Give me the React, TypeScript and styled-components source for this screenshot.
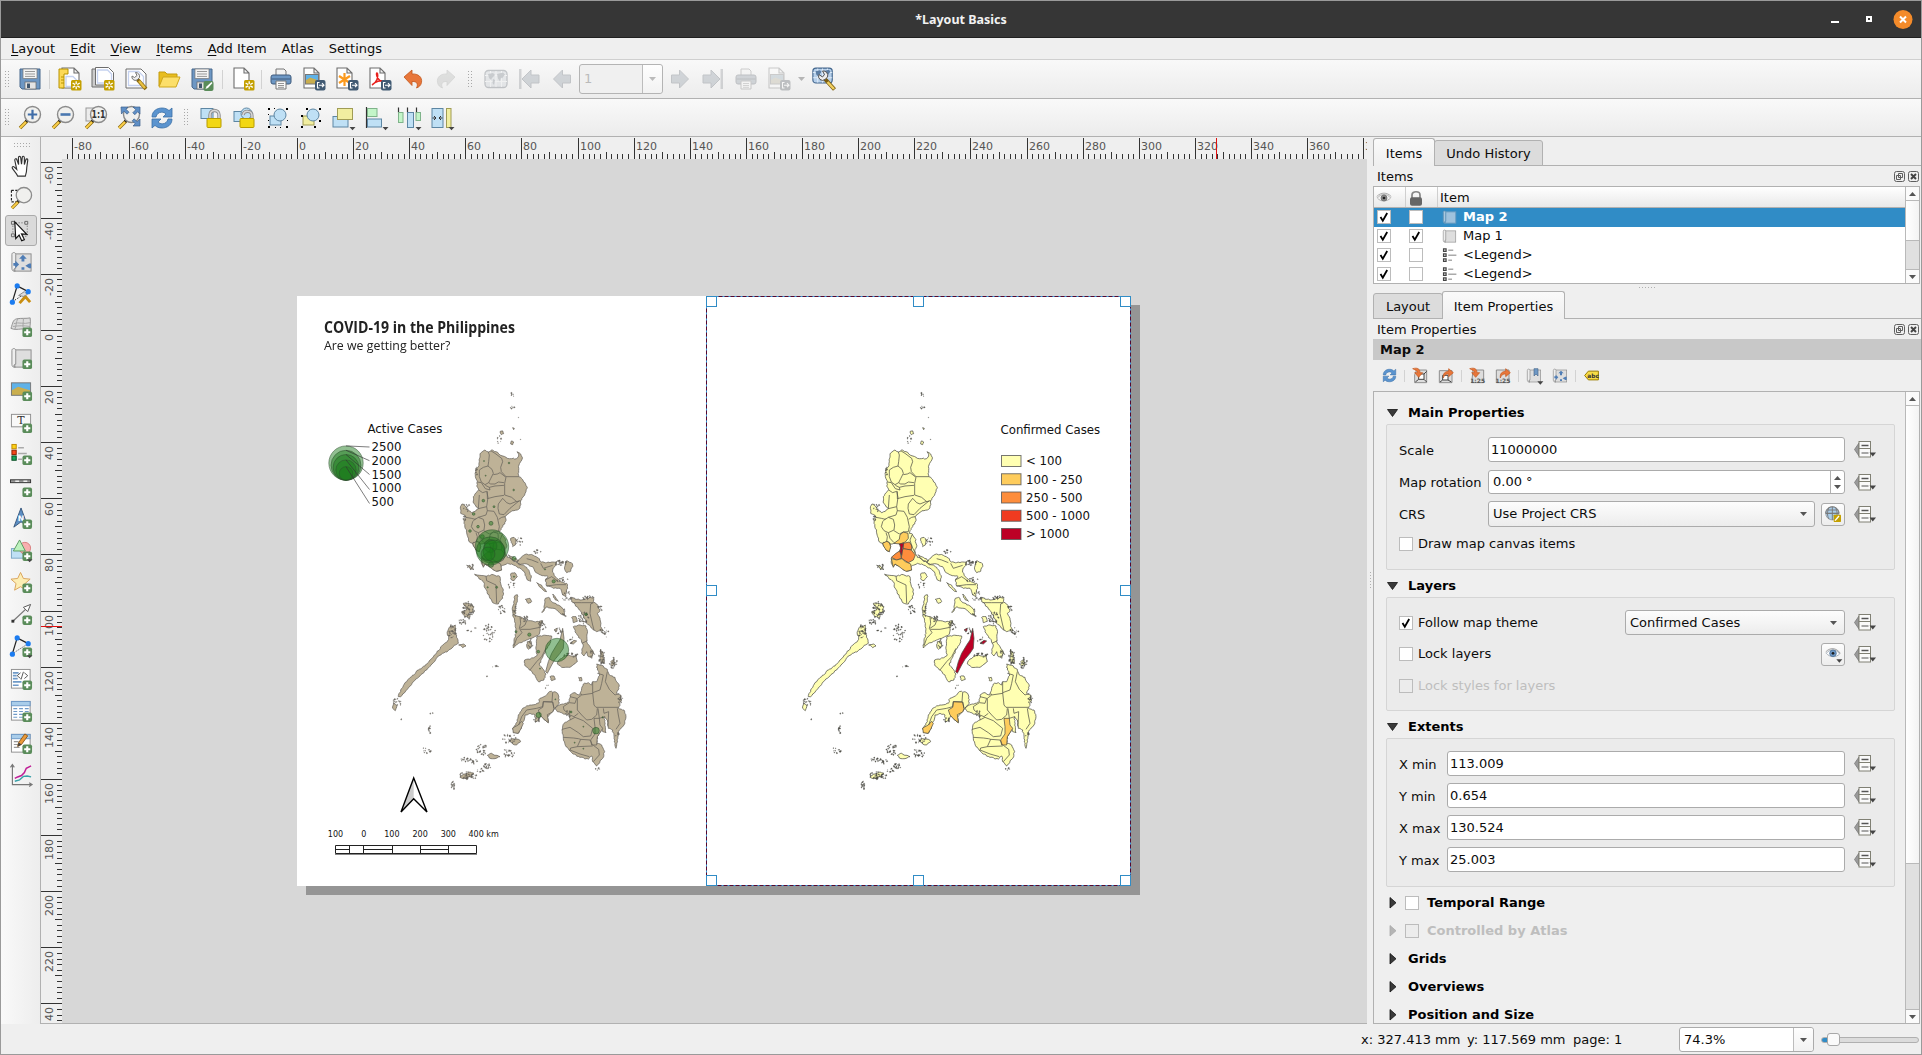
import React from 'react';
import styled, { createGlobalStyle, css } from 'styled-components';

const GlobalStyle = createGlobalStyle`
  * { box-sizing: border-box; }
  body { margin: 0; background: #efefef; }
  svg { display: block; flex: none; overflow: visible; }
`;

/* ---------- window chrome ---------- */

const Window = styled.div`
  width: 1922px;
  height: 1055px;
  border: 1px solid #9a9a9a;
  background: #efefef;
  display: flex;
  flex-direction: column;
  overflow: hidden;
  font-family: 'DejaVu Sans', sans-serif;
  font-size: 13px;
  line-height: 16px;
  color: #0c0c0c;
  white-space: pre;
`;
const TitleBar = styled.header`
  height: 37px;
  flex: none;
  background: #363636;
  border-bottom: 1px solid #202020;
  display: grid;
  grid-template-columns: 1fr auto 1fr;
  align-items: center;
`;
const WindowTitle = styled.div`
  grid-column: 2;
  font: bold 12.5px 'Noto Sans', sans-serif;
  color: #f2f2f2;
  padding-top: 1px;
`;
const WindowButtons = styled.div`
  display: flex;
  justify-content: flex-end;
  padding-right: 8px;
`;
const MenuBar = styled.nav`
  height: 22px;
  flex: none;
  border-bottom: 1px solid #cfcfcf;
  display: flex;
  gap: 15px;
  align-items: center;
  padding: 1px 0 0 10px;
`;
const Mnemonic = styled.span`
  text-decoration: underline;
  text-underline-offset: 2px;
  text-decoration-thickness: 1px;
  text-decoration-skip-ink: none;
`;
const Toolbar = styled.div<{ $h: number }>`
  height: ${(p) => p.$h}px;
  flex: none;
  display: flex;
  align-items: center;
  background: linear-gradient(#f9f9f9, #ececec);
  border-bottom: 1px solid #b1b1b1;
`;
const ToolButton = styled.div<{ $off?: boolean; $w?: number }>`
  width: ${(p) => p.$w ?? 33}px;
  height: 33px;
  flex: none;
  display: flex;
  align-items: center;
  justify-content: center;
  opacity: ${(p) => (p.$off ? 0.32 : 1)};
  filter: ${(p) => (p.$off ? 'grayscale(0.75)' : 'none')};
`;
const ToolSeparator = styled.div<{ $w: number; $h?: number }>`
  width: ${(p) => p.$w}px;
  height: ${(p) => p.$h ?? 19}px;
  flex: none;
  background: linear-gradient(#d2d2d2, #d2d2d2) center / 1px 100% no-repeat;
`;
const Grip = styled.div<{ $w: number }>`
  width: ${(p) => p.$w}px;
  height: 17px;
  flex: none;
  display: flex;
  justify-content: center;
  &::before {
    content: '';
    width: 5px;
    height: 17px;
    background: radial-gradient(circle at 0.5px 0.5px, #a8a8a8 0.6px, transparent 0.8px) 0 0 / 3px 3px;
  }
`;
const Main = styled.div`
  flex: 1;
  min-height: 0;
  display: flex;
`;
const SideTools = styled.aside`
  width: 40px;
  flex: none;
  border-right: 1px solid #b1b1b1;
  background: linear-gradient(90deg, #f9f9f9, #ededed);
  display: flex;
  flex-direction: column;
  align-items: center;
  padding-top: 6px;
`;
const SideGrip = styled.div`
  width: 17px;
  height: 5px;
  flex: none;
  margin: 0 0 2px 4px;
  background: radial-gradient(circle at 0.5px 0.5px, #a8a8a8 0.6px, transparent 0.8px) 0 0 / 3px 3px;
`;
const SideButton = styled.div<{ $on?: boolean }>`
  width: 32px;
  height: 31px;
  margin: 0.54px 0 0.54px 1px;
  flex: none;
  display: flex;
  align-items: center;
  justify-content: center;
  border-radius: 3px;
  border: 1px solid ${(p) => (p.$on ? '#ababab' : 'transparent')};
  background: ${(p) => (p.$on ? '#dadada' : 'transparent')};
`;

/* ---------- drawing area ---------- */

const Workspace = styled.section`
  width: 1326px;
  flex: none;
  display: flex;
  flex-direction: column;
  border-bottom: 1px solid #b1b1b1;
`;
const CanvasRow = styled.div`
  flex: 1;
  min-height: 0;
  display: flex;
`;
const Canvas = styled.div`
  flex: 1;
  position: relative;
  overflow: hidden;
  background: #d7d7d7;
`;
const Page = styled.div`
  position: absolute;
  left: 235px;
  top: 137px;
  width: 834px;
  height: 590px;
  background: #fff;
  box-shadow: 9px 9px 0 #959595;
`;
const PageDrawing = styled.svg`
  position: absolute;
  inset: 0;
`;
const PageLabel = styled.div<{ $x: number; $y: number; $size?: number }>`
  position: absolute;
  left: ${(p) => p.$x - 297}px;
  top: ${(p) => p.$y - 296 - 8 - 0.346 * (p.$size ?? 11.75)}px;
  font-size: ${(p) => p.$size ?? 11.75}px;
  line-height: 16px;
  color: #111;
`;
const PageHeading = styled(PageLabel)<{ $bold?: boolean; $sx: number }>`
  font-family: 'Open Sans', 'Noto Sans', sans-serif;
  font-weight: ${(p) => (p.$bold ? 700 : 400)};
  color: #222;
  transform: scaleX(${(p) => p.$sx});
  transform-origin: 0 0;
`;
const Centered = styled(PageLabel)`
  width: 40px;
  text-align: center;
`;

/* ---------- docks ---------- */

const Splitter = styled.div`
  width: 6px;
  flex: none;
  display: flex;
  align-items: center;
  justify-content: center;
  &::before {
    content: '';
    width: 1px;
    height: 17px;
    background: repeating-linear-gradient(#b0b0b0 0 1px, transparent 1px 3px);
  }
`;
const HSplitter = styled.div`
  height: 7px;
  flex: none;
  display: flex;
  align-items: center;
  justify-content: center;
  &::before {
    content: '';
    height: 1px;
    width: 17px;
    background: repeating-linear-gradient(90deg, #b0b0b0 0 1px, transparent 1px 3px);
  }
`;
const Docks = styled.aside`
  flex: 1;
  min-width: 0;
  display: flex;
  flex-direction: column;
`;
const Tabs = styled.div<{ $gap?: number }>`
  height: 28px;
  margin-top: ${(p) => p.$gap ?? 0}px;
  flex: none;
  display: flex;
  align-items: flex-end;
  box-shadow: inset 0 -1px #b1b1b1;
`;
const Tab = styled.div<{ $on?: boolean; $w: number }>`
  width: ${(p) => p.$w}px;
  height: ${(p) => (p.$on ? 28 : 26)}px;
  border: 1px solid #b1b1b1;
  border-bottom: ${(p) => (p.$on ? 0 : 1)}px solid #b1b1b1;
  border-radius: 3px 3px 0 0;
  background: ${(p) => (p.$on ? 'linear-gradient(#fafafa, #efefef)' : '#dcdcdc')};
  display: flex;
  align-items: center;
  justify-content: center;
  padding-top: 2px;
  & + & { margin-left: -1px; }
`;
const DockTitle = styled.div`
  height: 20px;
  flex: none;
  display: flex;
  align-items: center;
  justify-content: space-between;
  padding: 1px 2px 0 4px;
`;
const DockButtons = styled.div`
  display: flex;
  gap: 3px;
`;
const Tree = styled.div`
  height: 98px;
  margin-right: 1px;
  flex: none;
  border: 1px solid #b1b1b1;
  background: #fff;
  display: flex;
`;
const TreeBody = styled.div`
  flex: 1;
  display: flex;
  flex-direction: column;
  overflow: hidden;
`;
const TreeHeader = styled.div`
  height: 21px;
  flex: none;
  display: grid;
  grid-template-columns: 32px 32px 1fr;
  background: linear-gradient(#fff, #e9e9e9);
  border-bottom: 1px solid #b1b1b1;
`;
const HeaderCell = styled.div<{ $last?: boolean }>`
  display: flex;
  align-items: center;
  padding: 1px 0 0 2px;
  border-right: ${(p) => (p.$last ? 0 : 1)}px solid #cfcfcf;
`;
const TreeRow = styled.div<{ $on?: boolean }>`
  height: 19px;
  flex: none;
  display: grid;
  grid-template-columns: 32px 33px 21px 1fr;
  align-items: center;
  padding: 0 0 1px 3px;
  ${(p) =>
    p.$on &&
    css`
      background: #308cc6;
      color: #fff;
      font-weight: bold;
    `}
`;
const Check = styled.div<{ $off?: boolean }>`
  width: 14px;
  height: 14px;
  flex: none;
  border: 1px solid #bcbcbc;
  background: ${(p) => (p.$off ? '#ececec' : '#fff')};
  display: flex;
  align-items: center;
  justify-content: center;
`;
const ScrollTrack = styled.div`
  width: 14px;
  flex: none;
  border-left: 1px solid #b9b9b9;
  background: #e0e0e0;
  display: flex;
  flex-direction: column;
`;
const ScrollArrow = styled.div`
  height: 13px;
  flex: none;
  background: #fbfbfb;
  display: flex;
  align-items: center;
  justify-content: center;
`;
const ScrollThumb = styled.div<{ $h: number }>`
  height: ${(p) => p.$h}px;
  flex: none;
  background: linear-gradient(90deg, #fff, #f3f3f3);
  border: solid #b9b9b9;
  border-width: 1px 0;
`;
const Fill = styled.div<{ $line?: boolean }>`
  flex: 1;
  border-bottom: ${(p) => (p.$line ? 1 : 0)}px solid #b9b9b9;
`;
const ItemName = styled.div`
  height: 21px;
  flex: none;
  background: #c8c8c8;
  font-weight: bold;
  line-height: 21px;
  padding-left: 7px;
`;
const PropTools = styled.div`
  height: 31px;
  flex: none;
  display: flex;
  align-items: center;
  padding-left: 3px;
`;
const PropScroll = styled.div`
  flex: 1;
  min-height: 0;
  margin-right: 1px;
  border: 1px solid #b1b1b1;
  display: flex;
`;
const PropBody = styled.div`
  flex: 1;
  min-height: 0;
  overflow: hidden;
  padding: 8px 0 0 12px;
`;
const SectionTitle = styled.div<{ $gap?: number; $closed?: boolean; $off?: boolean }>`
  height: ${(p) => (p.$closed ? 28 : 24)}px;
  margin-top: ${(p) => p.$gap ?? 0}px;
  padding-top: ${(p) => (p.$closed ? 0 : 2)}px;
  display: flex;
  align-items: center;
  font-weight: bold;
  color: ${(p) => (p.$off ? '#bebebe' : '#000')};
`;
const Twisty = styled.div<{ $w?: number }>`
  width: ${(p) => p.$w ?? 22}px;
  padding-left: 1px;
`;
const CheckSlot = styled.div`
  width: 22px;
`;
const Group = styled.div<{ $h: number }>`
  width: 509px;
  height: ${(p) => p.$h}px;
  border: 1px solid #d5d5d5;
  border-radius: 2px;
  background: #ebebeb;
  padding: 12px 17px 0 12px;
`;
const Row = styled.div<{ $h: number; $gap?: number }>`
  height: ${(p) => p.$h}px;
  margin-top: ${(p) => p.$gap ?? 0}px;
  display: flex;
  align-items: center;
`;
const FieldLabel = styled.label<{ $w: number }>`
  width: ${(p) => p.$w}px;
  padding-top: 2px;
`;
const CheckLabel = styled.label<{ $off?: boolean }>`
  flex: 1;
  display: flex;
  align-items: center;
  gap: 5px;
  color: ${(p) => (p.$off ? '#bebebe' : 'inherit')};
`;
const Field = styled.div<{ $pad?: number }>`
  flex: 1;
  height: 100%;
  border: 1px solid #ababab;
  border-radius: 3px;
  background: #fff;
  display: flex;
  align-items: center;
  justify-content: space-between;
  padding-left: ${(p) => p.$pad ?? 2}px;
`;
const Spin = styled.div`
  width: 14px;
  height: 100%;
  border-left: 1px solid #b1b1b1;
  display: flex;
  flex-direction: column;
  gap: 5px;
  align-items: center;
  justify-content: center;
`;
const Select = styled.div<{ $w: number }>`
  width: ${(p) => p.$w}px;
  height: 100%;
  border: 1px solid #ababab;
  border-radius: 3px;
  background: linear-gradient(#fdfdfd, #ececec);
  display: flex;
  align-items: center;
  justify-content: space-between;
  padding: 0 7px 0 4px;
`;
const PushButton = styled.div`
  width: 24px;
  height: 23px;
  margin-left: 6px;
  border: 1px solid #ababab;
  border-radius: 3px;
  background: linear-gradient(#fdfdfd, #ededed);
  display: flex;
  align-items: center;
  justify-content: center;
`;
const Override = styled.div`
  margin-left: 9px;
  width: 23px;
`;
const AtlasCombo = styled.div`
  width: 84px;
  height: 30px;
  margin: 0 0 0 1px;
  flex: none;
  border: 1px solid #b4b4b4;
  border-radius: 3px;
  background: #f0f0f0;
  color: #bababa;
  display: flex;
  align-items: center;
  justify-content: space-between;
  padding-left: 4px;
`;
const ComboArrow = styled.div<{ $w: number }>`
  width: ${(p) => p.$w}px;
  height: 100%;
  border-left: 1px solid #bcbcbc;
  background: linear-gradient(#fefefe, #f2f2f2);
  border-radius: 0 3px 3px 0;
  display: flex;
  align-items: center;
  justify-content: center;
`;
const StatusBar = styled.footer`
  height: 30px;
  flex: none;
  display: flex;
  align-items: center;
  justify-content: flex-end;
  padding-top: 1px;
`;
const StatusText = styled.div<{ $w: number }>`
  width: ${(p) => p.$w}px;
`;
const ZoomCombo = styled.div`
  width: 135px;
  height: 25px;
  margin-right: 7px;
  border: 1px solid #ababab;
  border-radius: 3px;
  background: #fff;
  display: flex;
  align-items: center;
  justify-content: space-between;
  padding-left: 4px;
`;
const SliderTrack = styled.div`
  width: 98px;
  height: 6px;
  margin-right: 2px;
  border: 1px solid #b0b0b0;
  border-radius: 3px;
  background: linear-gradient(90deg, #308cc6 8px, #dcdcdc 8px);
  display: flex;
  align-items: center;
  padding-left: 5px;
`;
const SliderKnob = styled.div`
  width: 13px;
  height: 13px;
  flex: none;
  border: 1px solid #a8a8a8;
  border-radius: 3px;
  background: #fafafa;
`;

/* ---------- icons ---------- */

const Plus = ({ x = 13, y = 13 }: { x?: number; y?: number }) => (
  <g transform={`translate(${x} ${y})`}>
    <rect width="10" height="10" rx="2" fill="#5a8c5a" />
    <path d="M5 1.8v6.4M1.8 5h6.4" stroke="#fff" strokeWidth="2.2" />
  </g>
);
const StarBadge = () => (
  <g transform="translate(13 13)">
    <rect width="10.5" height="10.5" rx="1.5" fill="#c4a000" />
    <path d="M5.2 1.2v8M1.6 3l7.2 4.4M8.8 3L1.6 7.4" stroke="#fff" strokeWidth="1.3" />
    <circle cx="5.2" cy="5.2" r="1.3" fill="#c4a000" />
  </g>
);
const ExportBadge = () => (
  <g transform="translate(13 13)">
    <rect width="10.5" height="10.5" rx="2" fill="#415a73" />
    <path d="M4.5 2.5h-2v5.5h2M4 5.2h5M7 3.2l2 2-2 2" stroke="#fff" fill="none" strokeWidth="1.1" />
  </g>
);
const Sheet = ({ x = 3, w = 15 }: { x?: number; w?: number }) => (
  <path d={`M${x} 1h${w - 5}l5 5v15h-${w}z M${x + w - 5} 1v5h5`} fill="#fff" stroke="#6d6d6d" strokeWidth="1.1" />
);
const Lens = ({ children }: { children?: React.ReactNode }) => (
  <>
    <path d="M9 15l-7 7" stroke="#8a6a10" strokeWidth="3.4" />
    <path d="M8 16l-6 6" stroke="#fcd04a" strokeWidth="2" />
    <path d="M10 13.5l-2 2" stroke="#222" strokeWidth="3" />
    <circle cx="14.5" cy="8.5" r="8" fill="#f0f0ee" stroke="#8b8b8b" strokeWidth="1.4" />
    {children}
  </>
);
const Disk = () => (
  <>
    <path d="M2 2h20v20H4l-2-2z" fill="#6d97c4" stroke="#49688c" />
    <rect x="5" y="2" width="14" height="9.5" fill="#f4f4f4" stroke="#777" strokeWidth=".7" />
    <path d="M7 4.5h10M7 7h10M7 9.4h10" stroke="#999" />
    <rect x="7" y="15" width="11" height="7" fill="#e4e4e4" stroke="#666" strokeWidth=".7" />
    <rect x="9" y="16.5" width="3" height="4.5" fill="#3f566e" />
  </>
);
const Printer = () => (
  <>
    <path d="M7 9V2h8l2 2v5" fill="#f3f3f3" stroke="#777" />
    <rect x="2" y="8" width="20" height="9" rx="2" fill="#6d97c4" stroke="#3f5b7d" />
    <path d="M2.5 12h19" stroke="#3f5b7d" />
    <path d="M7 14h10v8H7z" fill="#fafafa" stroke="#777" />
    <path d="M9 16.5h6M9 18.5h6M9 20.3h6" stroke="#888" strokeWidth=".9" />
  </>
);
const Landscape = ({ x, y, w, h }: { x: number; y: number; w: number; h: number }) => (
  <>
    <rect x={x} y={y} width={w} height={h} fill="#5fb2e8" />
    <path d={`M${x} ${y + h * 0.62}l${w * 0.35}-${h * 0.3}l${w * 0.65} ${h * 0.3}v${h * 0.38}h-${w}z`} fill="#c9ae4e" />
    <rect x={x} y={y} width={w} height={h} fill="none" stroke="#777" />
  </>
);
const Refresh = () => (
  <g fill="#5b94cf" stroke="#3a6ea5" strokeWidth=".8">
    <path d="M2 11C2 5 7 2 12 2c3 0 5.500 1 7 2.600L22 2v9h-9l3-3c-1.200-1.300-2.500-1.800-4.500-1.800C9 6.200 6.500 8 6 11z" />
    <path d="M22 13c0 6-5 9-10 9-3 0-5.500-1-7-2.600L2 22v-9h9l-3 3c1.200 1.300 2.500 1.800 4.500 1.800 2.500 0 5-1.800 5.500-4.800z" />
  </g>
);
const MapRoll = () => (
  <>
    <rect x="5" y="3" width="17" height="18" fill="#dedede" stroke="#8c8c8c" />
    <path d="M2 3.500C2 1 6 1 6 3.500V18c-2-.5-3 3-.5 3-2.500.5-3.500-1-3.500-3z" fill="#eee" stroke="#8c8c8c" />
  </>
);
const BlueArrow = ({ d }: { d: string }) => <path d={d} fill="#6d97c4" stroke="#49688c" />;
const Drop = () => <path d="M17.500 21h6l-3 3.300z" fill="#444" />;
const GlobeMap = () => (
  <>
    <rect x="1" y="3.500" width="22" height="17" rx="3.500" fill="#b5cfea" stroke="#42658c" strokeWidth="1.300" />
    <path d="M1 8.500h22M1 14.500h22M6.500 4v16M12 4v16M17.500 4v16" stroke="#e6f0fa" />
    <path d="M4 7l5-1 2 2-3 3-1 2-2-2zM9 12l2 1-1 5-1.500-2zM13 7l6-1.500 2 2-3 4-1-1-1 4-2-3z" fill="#5b7da3" />
  </>
);

const icons: Record<string, React.ReactNode> = {
  save: <Disk />,
  saveAs: (
    <>
      <Disk />
      <rect x="13.500" y="14" width="10" height="10" rx="2" fill="#5a8c5a" />
      <path d="M15.500 22l1-2.500 5-4.500 1 1-4.500 5z" fill="#fff" />
    </>
  ),
  newLayout: (
    <>
      <Sheet x={4} w={17} />
      <path d="M8 9.500h7l4 4v6H8z" fill="none" stroke="#c5d2f0" strokeWidth="1.300" />
      <path d="M1 2h9v5H6v14H1z" fill="#fcd956" stroke="#b89300" />
      <path d="M3 10h3M3 13h3M3 16h3" stroke="#b89300" />
      <StarBadge />
    </>
  ),
  duplicate: (
    <>
      <path d="M1 2h18v18H1z" fill="#ccc" stroke="#6d6d6d" />
      <path d="M4.500 .5h13l5 5V18h-18z" fill="#fff" stroke="#6d6d6d" />
      <path d="M6.500 3h10l4 4v9h-14z" fill="none" stroke="#c5d2f0" strokeWidth="1.300" />
      <StarBadge />
    </>
  ),
  manager: (
    <>
      <path d="M2 2h15l5 5v14H2z" fill="#fff" stroke="#6d6d6d" />
      <path d="M4.500 4.500h10l5 5v9h-15z" fill="none" stroke="#c5d2f0" strokeWidth="1.300" />
      <path d="M13.500 12.500l8.500 9.500" stroke="#8a6a10" strokeWidth="3.800" />
      <path d="M15 14l6 7" stroke="#e9c040" strokeWidth="2.400" />
      <path d="M8 9a3.500 3.500 0 0 0 5 4l2.500-2.500a4 4 0 0 0-4-5l1.500 3-2.500 2z" fill="#eee" stroke="#777" />
    </>
  ),
  folder: (
    <>
      <path d="M2 19V5h6l2 2h10v4H7z" fill="#e8bd1e" stroke="#c39b0e" />
      <path d="M6 10h17l-4 10H2z" fill="#fcdf6a" stroke="#cfa71d" />
    </>
  ),
  newPage: (
    <>
      <Sheet />
      <StarBadge />
    </>
  ),
  print: <Printer />,
  exportImage: (
    <>
      <Sheet x={2} />
      <Landscape x={3.5} y={7.500} w={13} h={9.500} />
      <ExportBadge />
    </>
  ),
  exportSvg: (
    <>
      <Sheet x={2} />
      <path d="M9.500 6v13M4 9l11 7M15 9L4 16" stroke="#fb9a1e" strokeWidth="2.200" />
      <ExportBadge />
    </>
  ),
  exportPdf: (
    <>
      <Sheet x={2} />
      <path d="M4 18c5-3 6.500-8 5.500-11.500-.8-1.500-1.500.5-.5 3C10.500 13 13 15 16 15c1-1.500-5-2-9 .5" fill="none" stroke="#e8201c" strokeWidth="1.500" />
      <ExportBadge />
    </>
  ),
  undo: (
    <path
      d="M3 10l8-7v4c6-.5 10.500 3 9.500 8.500-.6 3-2.500 4.500-5 5.500 1.500-2.500 1.500-7-4.500-6.500v4z"
      fill="#e8763a"
      stroke="#c2571c"
      strokeWidth=".8"
    />
  ),
  redo: (
    <path
      d="M21 10l-8-7v4C7 6.500 2.500 10 3.500 15.500c.6 3 2.500 4.500 5 5.500C7 18.500 7 14 13 14.500v4z"
      fill="#aeb6ae"
      stroke="#8f988f"
      strokeWidth=".8"
    />
  ),
  atlas: <GlobeMap />,
  first: (
    <>
      <rect x="2" y="2" width="2.500" height="20" fill="#7f8fa3" />
      <BlueArrow d="M5 12l9-9v5h8v8h-8v5z" />
    </>
  ),
  prev: <BlueArrow d="M3.500 12l9-9v5h8v8h-8v5z" />,
  next: <BlueArrow d="M20.500 12l-9-9v5h-8v8h8v5z" />,
  last: (
    <>
      <rect x="19.500" y="2" width="2.500" height="20" fill="#7f8fa3" />
      <BlueArrow d="M19 12l-9-9v5H2v8h8v5z" />
    </>
  ),
  atlasSettings: (
    <>
      <g transform="translate(0 -2) scale(.88)">
        <GlobeMap />
      </g>
      <path d="M13 12l9.500 10.500" stroke="#7a5c10" strokeWidth="4" />
      <path d="M15.500 15l6.500 7" stroke="#f0cf60" strokeWidth="2.500" />
      <path d="M7 7.500a4 4 0 0 0 6 5l2.500-2.500A4.500 4.500 0 0 0 10.500 4l2 3.500-2 2.500z" fill="#eee" stroke="#555" />
    </>
  ),
  zoomIn: (
    <Lens>
      <path d="M14.500 3.800v9.400M9.800 8.500h9.400" stroke="#3f6da8" strokeWidth="2.200" />
    </Lens>
  ),
  zoomOut: (
    <Lens>
      <path d="M9.500 8.500h10" stroke="#4a78b0" strokeWidth="2.600" />
    </Lens>
  ),
  zoomActual: (
    <>
      <rect x="2" y="2" width="16" height="13" fill="#ececec" stroke="#999" />
      <Lens>
        <text x="14.500" y="12.200" fontSize="10" fontWeight="bold" textAnchor="middle" fill="#333" textLength="14" lengthAdjust="spacingAndGlyphs">
          1:1
        </text>
      </Lens>
    </>
  ),
  zoomFull: (
    <>
      <Lens />
      <g fill="#5f8fc6" stroke="#3c5f8a" strokeWidth=".7">
        <path d="M4 1h7l-2 2.200 3 3-2 2-3-3L4.500 8z" />
        <path d="M23 1v7l-2.200-2.300-3 3-2-2 3-3L16 1z" />
        <path d="M23 20h-7l2.200-2.200-3-3 2-2 3 3L23 13z" />
      </g>
    </>
  ),
  refresh: <Refresh />,
  lock: (
    <>
      <rect x="1" y="2.500" width="12" height="10" fill="#bfe0f5" stroke="#5d86a3" />
      <path d="M10 14V9c0-6 9-6 9 0v5" fill="none" stroke="#8d8d8d" strokeWidth="3.400" />
      <path d="M10 14V9c0-6 9-6 9 0v5" fill="none" stroke="#d8d8d8" strokeWidth="1.600" />
      <rect x="7" y="12.500" width="14" height="9" rx="1" fill="#f2d714" stroke="#b89c00" />
    </>
  ),
  unlock: (
    <>
      <rect x="1" y="5.500" width="9" height="10" fill="#bfe0f5" stroke="#5d86a3" />
      <circle cx="13.500" cy="7.500" r="5.500" fill="#bfe0f5" stroke="#5d86a3" />
      <path d="M10 9c1-5 9-5 9 1v4" fill="none" stroke="#8d8d8d" strokeWidth="3.200" />
      <path d="M10 9c1-5 9-5 9 1v4" fill="none" stroke="#d8d8d8" strokeWidth="1.500" />
      <rect x="7" y="12.500" width="14" height="9" rx="1" fill="#f2d714" stroke="#b89c00" />
    </>
  ),
  group: (
    <>
      <rect x="4" y="10" width="11" height="9" fill="#bfe0f5" stroke="#5d86a3" />
      <circle cx="14" cy="9" r="6" fill="#bfe0f5" stroke="#5d86a3" />
      <path d="M2 2h2v2H2zM20 2h2v2h-2zM2 20h2v2H2zM20 20h2v2h-2zM8 2h1v1H8zM2 8h1v1H2zM2 14h1v1H2zM21 14h1v1h-1zM9 21h1v1H9zM14 21h1v1h-1z" fill="#000" />
    </>
  ),
  ungroup: (
    <>
      <rect x="4" y="10" width="11" height="9" fill="#f1eea0" stroke="#a09c55" />
      <circle cx="14" cy="9" r="6" fill="#bfe0f5" stroke="#5d86a3" />
      <path d="M7 2h2v2H7zM20 2h2v2h-2zM2 9h2v2H2zM2 20h2v2H2zM15 20h2v2h-2zM20 14h2v2h-2z" fill="#000" />
    </>
  ),
  raise: (
    <>
      <rect x="1" y="10.500" width="15" height="10.500" fill="#bfe0f5" stroke="#5d86a3" />
      <rect x="5.500" y="2.500" width="15" height="11" fill="#f1eea0" stroke="#a09c55" />
      <Drop />
    </>
  ),
  align: (
    <>
      <path d="M1.500 1v21" stroke="#333" strokeWidth="1.200" />
      <rect x="2.500" y="2.500" width="9.500" height="8" fill="#c3f5c8" stroke="#7fb38a" />
      <rect x="2.500" y="13" width="14" height="8" fill="#bfe0f5" stroke="#5d86a3" />
      <Drop />
    </>
  ),
  distribute: (
    <>
      <path d="M0.500 1.500v5M9.500 1.500v5M18.500 1.500v5" stroke="#333" strokeWidth="1.200" />
      <rect x="0.500" y="6.500" width="4.500" height="10" fill="#c3f5c8" stroke="#7fb38a" />
      <rect x="9.500" y="6.500" width="6" height="15" fill="#bfe0f5" stroke="#5d86a3" />
      <rect x="18" y="6.500" width="4.500" height="8" fill="#c3f5c8" stroke="#7fb38a" />
      <Drop />
    </>
  ),
  resize: (
    <>
      <rect x="1" y="2.500" width="11" height="19" fill="#bfe0f5" stroke="#5d86a3" />
      <rect x="15.500" y="2.500" width="4.500" height="19" fill="#f1eea0" stroke="#a09c55" />
      <path d="M1.500 12h3M3 10l2 2-2 2M11.500 12h-3M10 10l-2 2 2 2" stroke="#333" fill="none" />
      <Drop />
    </>
  ),
  pan: (
    <path
      d="M8 22c-1-3-3.500-5-5.500-8-.8-1.600.8-2.600 2-1.400L7 15 5 5.500C4.800 3.500 6.800 3.300 7.200 5L9 10 8.800 3c0-2 2.200-2 2.400 0L12 9.500l.8-7C13 .8 15 1 15 3v7l1.500-5c.6-1.600 2.300-1.200 2 .6L17.500 13c0 4-.5 6-1.500 9z"
      fill="#fff"
      stroke="#333"
      strokeWidth="1.200"
    />
  ),
  zoomTool: (
    <>
      <path d="M1.500 3.500h10M1.500 3.500v12h8" stroke="#222" strokeDasharray="2.500 1.500" fill="none" strokeWidth="1.200" />
      <Lens />
    </>
  ),
  select: (
    <>
      <path d="M3 4h15v14H3z" fill="none" stroke="#555" strokeDasharray="1 2" />
      <path d="M1.500 2.500h3v3h-3zM15.500 2.500h3v3h-3zM1.500 15.500h3v3h-3z" fill="#ddd" stroke="#666" />
      <path d="M5 3l12.500 13-5.500-.5 3 6-2.800 1.200-2.700-6L6 20.500z" fill="#fff" stroke="#111" strokeWidth="1.200" />
    </>
  ),
  moveContent: (
    <>
      <MapRoll />
      <g fill="#4f7db5">
        <path d="M13.500 4l4 4h-2.500v3h-3V8H9.500zM12 17h3v2.500h-3zM5.500 10l4 4-4 4v-2.500h-2v-3h2zM22 13h-2l-4 2.500 4 2.500h2z" />
      </g>
    </>
  ),
  editNodes: (
    <>
      <path d="M2.500 19.500L7.500 3 19 9" stroke="#222" fill="none" strokeWidth="1.300" />
      <path d="M2.500 19.500L19 9" stroke="#222" strokeDasharray="1.500 1.500" />
      <path d="M10 21l7-8M14 12l7 8" stroke="#c98e10" strokeWidth="3" />
      <path d="M9 13l6-4 3 3-4 2z" fill="#ddd" stroke="#888" />
      <g fill="#1c7cf0">
        <circle cx="7.500" cy="3" r="2.700" />
        <circle cx="19" cy="9" r="2.700" />
        <circle cx="2.500" cy="20" r="2.700" />
      </g>
    </>
  ),
  add3d: (
    <>
      <path d="M1 14c2-6 2-9 6-10 5-1 10 0 14-1 1 6-1 10 0 13-6-4-13 1-20-2z" fill="#dcdcdc" stroke="#8f8f8f" />
      <path d="M4 9c5-2 10 1 17-1M8 4c-2 4-1 7-3 11M14 4c0 4-1 7 0 10M3 12c6-1 12-1 18 0" stroke="#a5a5a5" fill="none" />
      <Plus />
    </>
  ),
  addMap: (
    <>
      <MapRoll />
      <Plus />
    </>
  ),
  addPicture: (
    <>
      <Landscape x={1.500} y={4} w={20} h={13} />
      <Plus />
    </>
  ),
  addLabel: (
    <>
      <rect x="1.500" y="3.500" width="20" height="13" fill="#f8f8f8" stroke="#8f8f8f" />
      <text x="11.500" y="14" fontSize="11.500" textAnchor="middle" fontFamily="DejaVu Serif" fill="#333">T</text>
      <Plus />
    </>
  ),
  addLegend: (
    <>
      <g strokeWidth="1">
        <rect x="2" y="1.500" width="4.500" height="4.500" fill="#fcd116" stroke="#c08a00" />
        <rect x="2" y="7.500" width="4.500" height="4.500" fill="#f4471c" stroke="#8c2500" />
        <rect x="2" y="13.500" width="4.500" height="4.500" fill="#16a85a" stroke="#064a20" />
      </g>
      <path d="M8.500 5h6M8.500 11h9M8.500 17h4" stroke="#aaa" strokeWidth="1.500" />
      <Plus />
    </>
  ),
  addScale: (
    <>
      <rect x="0.500" y="5" width="21" height="3" fill="#999" stroke="#333" />
      <path d="M5.500 6.500h4M14 6.500h4" stroke="#eee" strokeWidth="1.500" />
      <Plus />
    </>
  ),
  addNorth: (
    <>
      <path d="M11.500 1L18.500 20l-7-4.500L4 21z" fill="#5d8fc4" stroke="#37587d" />
      <text x="11.500" y="14.500" fontSize="8" fontWeight="bold" textAnchor="middle" fill="#fff">N</text>
      <Plus />
    </>
  ),
  addShape: (
    <>
      <rect x="1.500" y="10" width="13" height="10" fill="#bfe0f5" stroke="#7ba6c4" />
      <circle cx="15.500" cy="9.500" r="6" fill="#f8b0b0" stroke="#d98080" />
      <path d="M10 1l6 11.500H3.500z" fill="#bdf2bd" stroke="#5a9a60" />
      <Plus />
      <Drop />
    </>
  ),
  addMarker: (
    <>
      <path d="M11 1.500l3 6.300 7 .7-5.300 4.600 1.600 6.900L11 16.400 4.800 20l1.500-6.900L1 8.500l7-.7z" fill="#fdeeb4" stroke="#d9a35a" />
      <Plus />
    </>
  ),
  addArrow: (
    <>
      <path d="M3 19L19 4" stroke="#777" strokeWidth="1.300" />
      <path d="M14 4.500l7.500-3-3 7.500z" fill="#fff" stroke="#555" />
      <rect x="1.500" y="17.500" width="3" height="3" fill="#333" />
      <Plus />
    </>
  ),
  addNode: (
    <>
      <path d="M2.500 19.500L7.500 3 19 9" stroke="#222" fill="none" strokeWidth="1.300" />
      <path d="M2.500 19.500L19 9" stroke="#222" strokeDasharray="1 1.500" />
      <g fill="#1c7cf0">
        <circle cx="7.500" cy="3" r="2.700" />
        <circle cx="19" cy="9" r="2.700" />
        <circle cx="2.500" cy="20" r="2.700" />
      </g>
      <Plus />
      <Drop />
    </>
  ),
  addHtml: (
    <>
      <rect x="1.500" y="1.500" width="19.500" height="19.500" fill="#fff" stroke="#8f8f8f" />
      <path d="M3 5h6M3 8h4M3 11h5M3 14.500h9M3 18h6" stroke="#6f9ac8" strokeWidth="1.800" />
      <path d="M11 5l-3.500 3L11 11M15 5l3.500 3L15 11M14 4l-2.500 8" stroke="#555" fill="none" />
      <Plus />
    </>
  ),
  addTable: (
    <>
      <rect x="1.500" y="1.500" width="19.500" height="19.500" fill="#fff" stroke="#8f8f8f" />
      <rect x="1.500" y="1.500" width="19.500" height="4.500" fill="#a9cdea" stroke="#6f9ac8" />
      <path d="M3.500 9h16M3.500 12h16M3.500 15h16M3.500 18h10" stroke="#6f9ac8" strokeWidth="1.300" strokeDasharray="4 2" />
      <Plus />
    </>
  ),
  addFixed: (
    <>
      <rect x="1.500" y="2.500" width="19.500" height="18.500" fill="#fff" stroke="#8f8f8f" />
      <rect x="1.500" y="2.500" width="19.500" height="4.500" fill="#a9cdea" stroke="#6f9ac8" />
      <path d="M4 10h5M4 13h5M4 16h6" stroke="#999" strokeWidth="1.200" />
      <path d="M8 15l1-4 6.500-9 3 2-6.500 9z" fill="#eb9a3a" stroke="#8d5a1c" />
      <path d="M8 15l1-4 3 2z" fill="#444" />
      <Plus />
    </>
  ),
  addElevation: (
    <>
      <path d="M2.500 1v20.500h20M.5 3.500l2-3 2 3M20 19.500l3 2-3 2" stroke="#777" fill="none" strokeWidth="1.200" />
      <path d="M5 15l3-1.500 4-1.500 3-3 2-4.500 5-2.500" stroke="#c01e96" fill="none" strokeWidth="1.600" />
      <path d="M5 18l5-1.500 4-3.500 4-.5 4 1" stroke="#38a0a8" fill="none" strokeWidth="1.400" />
    </>
  ),
  eye: (
    <>
      <path d="M2 11C7 4 17 4 22 12 16 18 7 17 2 11z" fill="#fff" stroke="#9aa5b0" strokeWidth="1.300" />
      <path d="M1 9C7 2 17 2 23 11" stroke="#777" fill="none" />
      <circle cx="12" cy="11" r="5" fill="#6d97c4" stroke="#456a90" />
      <circle cx="12" cy="11" r="2" fill="#1c1c1c" />
      <path d="M17 20h9l-4.500 5z" fill="#444" />
    </>
  ),
  eyeGray: (
    <>
      <path d="M2 12C7 5 17 5 22 12 16 18 7 18 2 12z" fill="#f4f4f4" stroke="#aaa" strokeWidth="1.300" />
      <path d="M1 10C7 3 17 3 23 10" stroke="#888" fill="none" />
      <circle cx="12" cy="12" r="4.500" fill="#888" stroke="#666" />
      <circle cx="12" cy="12" r="2" fill="#222" />
    </>
  ),
  padlock: (
    <>
      <path d="M6 12V7.500C6 1 18 1 18 7.500V12" stroke="#888" strokeWidth="2.600" fill="none" />
      <rect x="3" y="11" width="18" height="12.500" rx="3" fill="#666" />
    </>
  ),
  mapItem: <MapRoll />,
  mapItemOn: (
    <>
      <rect x="5" y="3" width="17" height="18" fill="#9fc2dd" stroke="#6a9cc0" strokeWidth="1.500" />
      <path d="M2 3.500C2 1 6 1 6 3.500V18c-2-.5-3 3-.5 3-2.500.5-3.500-1-3.500-3z" fill="#a9c8de" stroke="#5f93b8" strokeWidth="1.500" />
    </>
  ),
  legendItem: (
    <>
      <path d="M2.500 1.500h4v4h-4zM2.500 9.500h4v4h-4zM2.500 17.500h4v4h-4z" fill="#fff" stroke="#444" strokeWidth="2" />
      <path d="M10 3.500h8M10 11.500h13M10 19.500h6" stroke="#aaa" strokeWidth="2.500" />
    </>
  ),
  extentIn: (
    <>
      <path d="M7 3h15v19H4V10z" fill="#ddd" stroke="#888" strokeWidth="1.400" />
      <path d="M10 9h8v8h-8zM18 9l4-4M18 17l4 4M10 17l-5 4" fill="#fff" stroke="#444" strokeWidth="1.500" />
      <path d="M1 1c7-2 11 0 11 6h4l-6 7-6-7h4c0-3-3-4-7-6z" fill="#e8763a" stroke="#c2571c" />
    </>
  ),
  extentOut: (
    <>
      <path d="M2 4h19v18H2z" fill="#ddd" stroke="#888" strokeWidth="1.400" />
      <path d="M7 11h8v7H7zM15 18l5 3M7 18l-4 3" fill="#fff" stroke="#444" strokeWidth="1.500" />
      <path d="M8 15C7 8 11 5 16 5V1l7 6-7 6V9c-4 0-6 1-8 6z" fill="#e8763a" stroke="#c2571c" />
    </>
  ),
  scaleIn: (
    <>
      <path d="M6 3h16v19H4z" fill="#ddd" stroke="#888" strokeWidth="1.400" />
      <text x="13" y="23" fontSize="9" fontWeight="bold" textAnchor="middle" fill="#555">1:25</text>
      <path d="M1 1c7-2 11 0 11 6h4l-6 7-6-7h4c0-3-3-4-7-6z" fill="#e8763a" stroke="#c2571c" />
    </>
  ),
  scaleOut: (
    <>
      <path d="M2 3h19v19H2z" fill="#ddd" stroke="#888" strokeWidth="1.400" />
      <text x="12" y="23" fontSize="9" fontWeight="bold" textAnchor="middle" fill="#555">1:25</text>
      <path d="M8 15C7 8 11 5 16 5V1l7 6-7 6V9c-4 0-6 1-8 6z" fill="#e8763a" stroke="#c2571c" />
    </>
  ),
  bookmark: (
    <>
      <MapRoll />
      <path d="M12 1h6v11l-3-3-3 3z" fill="#6d97c4" stroke="#49688c" />
      <path d="M17 20h9l-4.500 5z" fill="#444" />
    </>
  ),
  labels: (
    <>
      <path d="M1 12l6-7h16v14H7z" fill="#f7dc45" stroke="#9a7d00" strokeWidth="1.600" />
      <text x="14.500" y="15.500" fontSize="9.500" fontWeight="bold" textAnchor="middle" fill="#333">abc</text>
    </>
  ),
  globe: (
    <>
      <circle cx="11" cy="11" r="10" fill="#a9cdea" stroke="#888" />
      <path d="M1 11C2-2 20-2 21 11zM11 1v20M1.500 11h19M6 2.500c-3 6-3 12 0 17M16 2.500c3 6 3 12 0 17M3 6h16" fill="none" stroke="#777" strokeWidth="1.400" />
      <rect x="13" y="13" width="11" height="11" rx="1" fill="#c4a000" />
      <path d="M15 22l6-7" stroke="#fff" strokeWidth="2" />
    </>
  ),
};

const Icon = ({ name, size = 24 }: { name: string; size?: number }) => (
  <svg width={size} height={size} viewBox="0 0 24 24">
    {icons[name]}
  </svg>
);
const Arrow = ({ up, color = '#555' }: { up?: boolean; color?: string }) => (
  <svg width="7" height="4" viewBox="0 0 7 4">
    <path d={up ? 'M0 4h7L3.500 0z' : 'M0 0h7L3.500 4z'} fill={color} />
  </svg>
);
const Triangle = ({ open, off }: { open?: boolean; off?: boolean }) => (
  <svg width="12" height="12" viewBox="0 0 12 12">
    <path d={open ? 'M0.500 2.500h10L5.500 9.500z' : 'M3 0.500v10.500L9 5.750z'} fill={off ? '#b5b5b5' : '#3a3a3a'} stroke={off ? '#aaa' : '#111'} strokeWidth=".8" />
  </svg>
);
const Tick = () => (
  <svg width="10" height="10" viewBox="0 0 10 10">
    <path d="M1.500 5l2.300 3.800L8.200 1" fill="none" stroke="#000" strokeWidth="1.800" />
  </svg>
);
const DataDefined = () => (
  <Override>
    <svg width="23" height="17" viewBox="0 0 23 17">
      <path d="M5 2L.5 8.500 5 15z" fill="#9a9a9a" stroke="#777" strokeWidth=".8" />
      <rect x="5" y="0.500" width="11.500" height="15.500" fill="#fafafa" stroke="#808074" />
      <path d="M5 7.500h11.500" stroke="#808074" />
      <path d="M7.500 4.500h7" stroke="#555" strokeWidth="1.500" />
      <path d="M7.500 12h7" stroke="#555" />
      <path d="M15.500 11.500h6.500l-3.250 4z" fill="#444" />
    </svg>
  </Override>
);
const DockButtonPair = () => (
  <DockButtons>
    {[0, 1].map((i) => (
      <svg key={i} width="11" height="11" viewBox="0 0 11 11">
        <rect x=".5" y=".5" width="10" height="10" rx="2" fill="none" stroke="#5f5f5f" />
        {i === 0 ? (
          <path d="M4.500 2.500h4v4h-4zM2.500 4.500h4v4h-4z" fill="none" stroke="#5f5f5f" />
        ) : (
          <path d="M3 3l5 5M8 3L3 8" stroke="#444" strokeWidth="1.900" />
        )}
      </svg>
    ))}
  </DockButtons>
);

/* ---------- rulers ---------- */

const PX_PER_MM = 56.13 / 20;

const RulerDrawing = styled.svg`
  && { overflow: hidden; }
`;

const HorizontalRuler = () => {
  const marks = [];
  for (let mm = -82; mm <= 380; mm += 2) {
    const x = Math.floor(297.4 + mm * PX_PER_MM) - 41;
    if (x < 21 || x >= 1326) continue;
    const len = mm % 20 === 0 ? 21 : mm % 10 === 0 ? 7 : 5;
    marks.push(<rect key={mm} x={x} y={22 - len} width="1" height={len} fill="#333" />);
    if (mm % 20 === 0)
      marks.push(
        <text key={`t${mm}`} x={x + 2} y="13" fontSize="11" fill="#555">
          {mm}
        </text>,
      );
  }
  return (
    <RulerDrawing width="1326" height="22">
      {marks}
      <rect x="1175" y="1" width="1" height="21" fill="#e01010" />
    </RulerDrawing>
  );
};

const VerticalRuler = () => {
  const marks = [];
  for (let mm = -60; mm <= 246; mm += 2) {
    const y = Math.floor(330.4 + mm * PX_PER_MM) - 159;
    const len = mm % 20 === 0 ? 21 : mm % 10 === 0 ? 7 : 5;
    marks.push(<rect key={mm} x={21 - len} y={y} width={len} height="1" fill="#333" />);
    if (mm % 20 === 0)
      marks.push(
        <text key={`t${mm}`} transform={`translate(12 ${y + 4}) rotate(-90)`} textAnchor="end" fontSize="11" fill="#555">
          {mm === 240 ? '40' : mm}
        </text>,
      );
  }
  return (
    <RulerDrawing width="21" height="864">
      {marks}
      <rect x="0" y="467" width="21" height="1" fill="#e01010" />
    </RulerDrawing>
  );
};

/* ---------- archipelago ---------- */

const islands = [
  // Luzon with the Bondoc peninsula
  '330,222 345,210 355,216 365,210 378,215 392,226 408,232 425,236 440,236 446,228 441,215 452,222 458,234 452,245 447,255 446,272 446,290 455,296 465,308 472,322 468,335 460,350 452,362 450,378 446,388 432,392 418,398 405,410 408,422 398,440 390,452 388,460 397,462 405,475 408,490 410,500 404,510 408,525 412,532 425,538 440,548 450,552 460,555 470,562 478,575 484,592 482,604 472,600 465,580 455,568 440,560 425,552 412,550 398,556 392,560 395,570 380,574 370,570 366,560 355,558 345,552 340,560 334,550 334,535 345,525 358,515 362,505 360,492 352,486 342,490 330,492 320,485 308,490 298,486 293,470 290,450 282,430 280,418 288,412 284,405 272,400 271,385 276,372 286,378 296,392 304,398 316,394 325,386 318,380 311,370 310,350 318,338 326,330 320,318 322,305 316,290 316,270 324,262 328,245',
  '308,490 320,484 328,488 332,500 328,515 318,510 312,500',
  '440,545 455,530 470,522 490,526 508,536 514,546 530,548 548,546 562,544 558,556 548,570 552,585 565,598 575,606 590,610 592,620 588,650 578,645 570,625 550,625 530,618 526,600 534,590 512,585 495,575 488,560 470,552 458,552 450,555',
  '415,524 430,532 446,542 440,546 422,536',
  '422,475 432,472 440,480 436,495 428,500 424,488',
  '590,542 604,548 608,560 602,574 590,578 584,568 586,552',
  '422,582 435,578 442,590 432,602 422,596',
  '314,582 345,588 370,584 390,590 392,610 400,630 398,655 385,672 368,668 358,650 345,625 340,605 325,592',
  '290,556 300,558 312,568 300,566',
  '500,608 512,614 530,635 524,634 508,620',
  '548,642 556,650 565,664 556,660',
  '516,698 523,685 526,655 535,652 548,668 570,678 582,690 584,708 570,700 555,686 540,684 530,680',
  '466,658 480,655 485,664 474,670',
  '434,648 442,644 442,665 436,680 438,700 430,704 427,690 432,670',
  '428,704 450,710 470,722 492,725 518,722 510,745 508,762 485,775 460,784 445,790 430,804 432,780 438,760 436,730',
  '472,785 482,782 485,800 476,808 470,798',
  '500,770 520,766 545,768 540,790 528,808 518,832 508,855 520,868 528,882 522,900 505,905 495,885 478,870 464,855 464,840 480,838 500,828 498,800',
  '568,840 590,826 618,828 622,845 600,862 575,862 562,852',
  '540,890 552,888 556,898 545,902',
  '626,892 634,892 636,902 628,902',
  '602,652 630,660 650,655 672,652 670,665 680,672 690,690 682,700 690,715 692,735 698,752 680,755 670,750 650,730 640,705 628,690 615,672 605,665',
  '610,740 630,735 648,738 652,760 650,785 660,800 670,815 665,835 655,830 650,815 642,828 635,820 640,795 630,775 618,760',
  '605,712 618,710 622,724 610,728',
  '692,808 700,820 704,850 694,850 690,830',
  '722,845 732,838 734,855 724,858',
  '680,852 695,856 712,868 718,885 735,892 748,918 740,940 752,945 755,960 745,985 762,990 768,1010 762,1035 748,1050 745,1065 738,1105 732,1075 728,1050 715,1045 712,1020 704,1010 704,1035 708,1058 698,1055 695,1042 690,1058 682,1070 680,1090 695,1095 704,1115 698,1135 680,1158 668,1145 665,1128 655,1138 630,1132 605,1118 588,1100 580,1075 576,1050 582,1030 600,1020 598,1005 580,1002 562,995 555,985 568,975 585,970 598,965 600,945 612,938 630,945 635,925 640,912 655,908 665,915 668,905 680,905 690,885 682,870',
  '568,970 565,945 555,935 538,935 530,945 510,955 505,970 480,975 458,985 445,1005 442,1025 428,1045 430,1058 445,1060 452,1048 455,1030 462,1022 465,1005 480,1000 495,1005 495,1025 505,1020 512,1008 525,1020 535,1028 532,1012 548,995 555,985',
  '85,950 92,930 105,908 125,890 145,870 165,858 180,840 200,818 215,798 232,785 236,778 232,755 240,740 256,735 256,760 262,775 265,790 250,800 235,812 205,828 190,848 170,870 150,888 130,905 110,930 92,950',
  '68,985 72,970 80,975 76,992',
  '266,795 280,792 288,798 278,803',
  '280,670 300,672 312,680 308,695 296,700 300,712 285,710 275,695 290,690',
  '420,1085 428,1076 445,1078 452,1085 440,1095 428,1092',
  '352,1126 365,1120 378,1126 390,1130 375,1136 358,1134',
  '270,1192 280,1182 300,1176 312,1180 300,1190 280,1196',
  '390,155 399,153 401,161 394,164',
  '424,183 431,186 428,194 422,192',
  '428,143 433,145 431,149',
];

const provinceBorders = [
  '355,216 358,225 356,245 354,258',
  '362,212 375,220 395,235 398,245 392,262 394,275 408,290 446,290',
  '328,270 340,262 354,258 366,268 370,280 362,296 356,308 345,314 334,306 328,290 328,270',
  '370,284 382,282 390,278 408,292 404,310 404,345 425,352 440,365 452,362',
  '356,308 362,312 375,312 385,306 402,308',
  '322,306 334,308 346,326 360,330 358,322 375,318 402,316',
  '346,316 358,322',
  '352,334 352,356 375,350 402,346',
  '385,372 398,355 410,368 420,372 440,364',
  '385,372 384,385 388,402 402,404 420,385 448,362',
  '326,330 338,338 350,334 354,352 350,380 325,386 326,372 328,345',
  '350,380 352,392 372,394 382,412 388,440 385,455',
  '352,392 348,405 325,412 316,418 304,415 288,412',
  '325,412 340,418 344,435 342,450 325,458 312,452 304,440 308,425 318,415',
  '385,455 370,456 358,462 342,452',
  '318,458 322,470 320,485',
  '386,418 395,412 405,410',
  '325,458 330,475 342,488',
  '396,465 390,480 396,500 406,520',
  '348,588 350,602 378,615 380,670',
  '470,536 485,540 505,548',
  '512,550 520,565 548,556',
  '526,600 545,590 565,604',
  '530,618 560,614 588,614',
  '450,710 452,730 448,745 456,758 440,775 432,798',
  '470,722 465,735 450,745',
  '452,748 480,748 510,742',
  '528,805 515,830 500,845 480,870',
  '608,668 635,668 670,668 662,672 660,700 668,735 672,750',
  '636,790 652,782',
  '682,880 700,885 695,910 690,930 668,938 668,905',
  '668,938 672,975 678,982 745,982',
  '712,875 706,905 718,928 735,945 748,940',
  '635,945 668,940',
  '622,955 635,945 632,940',
  '622,955 622,990 635,1005 650,1020 665,1018 680,1005 682,985',
  '600,950 620,955 615,970 598,968',
  '598,968 580,980 582,990 600,1005 612,1010 625,1000',
  '600,1020 615,1012 640,1022 668,1045 662,1068',
  '576,1048 600,1042 625,1058 640,1070 662,1068',
  '580,1072 610,1074 625,1076 632,1078 660,1080 668,1096',
  '632,1078 622,1100 602,1104 600,1110 630,1122 658,1130',
  '622,1100 668,1098',
  '684,985 688,1015 704,1010',
  '700,985 702,1000 716,995 714,1040',
  '742,985 745,1005 750,1030 738,1048',
  '670,1096 686,1108 688,1125 670,1145',
  '548,938 546,966 520,965 518,980 500,985 470,990 455,1010 446,1035',
  '548,966 552,985',
];

const CEBU = '578,745 582,775 580,805 570,820 555,838 545,855 532,880 527,875 535,845 545,820 560,795 570,780';

const shadedProvinces: [string, string][] = [
  ['#fecc5c', '342,490 358,478 360,465 370,456 384,460 385,475 376,486 360,492'],
  ['#fecc5c', '308,490 320,484 328,488 332,500 328,515 318,510 312,500'],
  ['#fd8d3c', '370,490 388,486 396,498 394,510 380,508 370,506'],
  ['#fd8d3c', '366,515 370,506 394,510 406,525 400,540 385,548 372,540 364,535'],
  ['#fd8d3c', '334,532 348,520 360,512 364,535 350,540'],
  ['#bd0026', '358,492 371,489 368,505 365,526 360,515 362,502'],
  ['#fecc5c', '334,536 350,540 366,536 376,545 392,552 395,570 378,574 368,568 355,558 345,552 340,562'],
  ['#bd0026', CEBU],
  ['#bd0026', '600,790 612,781 620,783 610,792'],
  ['#bd0026', '552,750 562,744 560,754'],
  ['#fecc5c', '520,965 548,966 552,985 548,996 532,1004 535,1028 522,1018 510,1005 505,990 518,982'],
  ['#fecc5c', '445,1035 455,1024 460,1030 452,1048 444,1060 430,1058 428,1044'],
  ['#fecc5c', '672,1015 688,1015 690,1035 698,1045 690,1058 682,1070 680,1095 665,1095 662,1080 675,1062 675,1040'],
];

// Tiny islets, as cluster centre, spread and count.
const isletClusters: [number, number, number, number, number][] = [
  [423, 48, 7, 13, 6], [426, 84, 8, 6, 7], [445, 114, 2, 2, 1], [386, 180, 9, 14, 8], [449, 178, 2, 2, 1],
  [288, 382, 10, 12, 10], [280, 415, 5, 10, 6], [318, 275, 4, 14, 7], [446, 485, 14, 12, 14], [500, 516, 12, 7, 9],
  [570, 550, 22, 10, 26], [575, 600, 18, 8, 14], [300, 560, 14, 8, 7], [425, 620, 14, 16, 8], [395, 688, 12, 16, 18],
  [294, 690, 18, 26, 50], [275, 725, 14, 8, 18], [245, 755, 12, 22, 34], [355, 758, 20, 28, 34], [300, 745, 20, 12, 6],
  [82, 965, 14, 12, 16], [375, 862, 10, 6, 7], [350, 888, 3, 2, 2], [185, 1000, 6, 3, 2], [177, 1048, 6, 12, 10],
  [165, 1112, 16, 9, 12], [93, 1016, 2, 2, 2], [415, 1075, 22, 16, 26], [410, 1120, 24, 12, 28], [335, 1108, 18, 16, 30],
  [285, 1138, 18, 8, 16], [350, 1158, 12, 8, 22], [312, 1145, 10, 8, 10], [295, 1186, 28, 12, 44], [248, 1215, 6, 14, 16],
  [330, 1172, 10, 8, 10], [515, 735, 12, 16, 24], [562, 750, 16, 12, 10], [600, 825, 24, 6, 22], [640, 712, 16, 20, 34],
  [590, 650, 14, 18, 20], [650, 652, 18, 6, 16], [700, 760, 14, 18, 16], [694, 830, 10, 24, 34], [728, 848, 12, 16, 22],
  [665, 822, 8, 12, 12], [580, 700, 10, 14, 6], [605, 780, 14, 10, 8], [748, 955, 8, 16, 14], [595, 1000, 10, 10, 10],
  [682, 1166, 8, 4, 6], [530, 920, 8, 6, 3], [480, 790, 8, 14, 12], [462, 714, 10, 10, 16], [500, 1020, 10, 10, 10],
  [434, 690, 5, 18, 10], [688, 685, 6, 12, 10], [741, 1064, 5, 8, 6],
];

const islets = (() => {
  let seed = 7;
  const rnd = () => {
    seed = (seed * 16807) % 2147483647;
    return seed / 2147483647;
  };
  let d = '';
  isletClusters.forEach(([cx, cy, rx, ry, n]) => {
    for (let i = 0; i < n; i++) {
      const a = rnd() * Math.PI * 2;
      const r = Math.sqrt(rnd());
      const x = cx + Math.cos(a) * r * rx;
      const y = cy + Math.sin(a) * r * ry;
      const s = 0.8 + rnd() * 2.2;
      const t = 0.8 + rnd() * 2.6;
      d += `M${x.toFixed(1)} ${y.toFixed(1)}l${s.toFixed(1)}-${(t / 2).toFixed(1)}l${(s / 2).toFixed(1)} ${t.toFixed(1)}l-${s.toFixed(1)} ${(t / 2).toFixed(1)}z`;
    }
  });
  return d;
})();

// Adds small deterministic coves to every coast segment.
const coast = (points: string, seedStart: number) => {
  let seed = seedStart * 97 + 13;
  const rnd = () => {
    seed = (seed * 16807) % 2147483647;
    return seed / 2147483647 - 0.5;
  };
  const p = points.split(' ').map((s) => s.split(',').map(Number));
  return p
    .map(([x, y], i) => {
      const [nx, ny] = p[(i + 1) % p.length];
      const n = Math.max(1, Math.round(Math.hypot(nx - x, ny - y) / 5));
      let out = `${i ? 'L' : 'M'}${x} ${y}`;
      for (let k = 1; k < n; k++) {
        out += `L${(x + ((nx - x) * k) / n + rnd() * 3.6).toFixed(1)} ${(y + ((ny - y) * k) / n + rnd() * 3.6).toFixed(1)}`;
      }
      return out;
    })
    .join('') + 'z';
};
const coastPaths = islands.map((s, i) => coast(s, i + 1)).join('');

const Archipelago = ({ x, land, line, shaded }: { x: number; land: string; line: string; shaded?: boolean }) => (
  <g transform={`translate(${x} 380) scale(.33333)`} stroke={line} strokeWidth="2.200" strokeLinejoin="round">
    <path d={coastPaths} fill={land} />
    {shadedProvinces.map(([fill, pts]) => (
      <polygon key={pts} points={pts} fill={shaded ? fill : land} />
    ))}
    {provinceBorders.map((pts) => (
      <polyline key={pts} points={pts} fill="none" />
    ))}
    <path d={islets} fill={line} strokeWidth="1" />
  </g>
);

const activeCases: [number, number, number][] = [
  [342, 243, 1.5], [347, 287, 1.5], [417, 249, 2.5], [431, 330, 2.5], [340, 362, 4], [372, 380, 3], [311, 402, 4],
  [324, 440, 4], [363, 430, 6], [300, 453, 4], [337, 470, 6], [432, 535, 6], [551, 604, 5], [525, 568, 2],
  [432, 590, 2], [353, 622, 2], [380, 622, 3], [478, 764, 5], [438, 755, 3], [505, 815, 4], [648, 703, 4],
  [510, 866, 1.5], [506, 1005, 8], [678, 1052, 10], [603, 996, 3], [698, 1012, 2], [640, 1040, 1.5], [614, 1088, 1.500],
  [556, 958, 1.500], [640, 1106, 1.500], [363, 554, 8],
];

const swatches = ['#ffffb2', '#fecc5c', '#fd8d3c', '#f03b20', '#bd0026'];
const classLabels = ['< 100', '100 - 250', '250 - 500', '500 - 1000', '> 1000'];
const bubbleLegend: [string, number, number][] = [
  ['2500', 17.2, 447], ['2000', 15, 460.7], ['1500', 12.9, 474.5], ['1000', 10.2, 489.500], ['500', 6.800, 503.500],
];
const handles: [number, number][] = [
  [706.5, 296.5], [913.5, 296.5], [1120.5, 296.5], [706.5, 585.5], [1120.5, 585.5], [706.5, 875.5], [913.5, 875.5], [1120.5, 875.5],
];

const LayoutPage = () => (
  <Page>
    <PageDrawing width="834" height="590" viewBox="297 296 834 590">
      <Archipelago x={370} land="#beb297" line="#65625a" />
      <g fill="#1a7a1a" fillOpacity=".48" stroke="#2c4a2c" strokeOpacity=".6" strokeWidth=".8">
        {activeCases.map(([x, y, r]) => (
          <circle key={`${x}-${y}`} cx={370 + x / 3} cy={380 + y / 3} r={r / 3} />
        ))}
        <circle cx="557" cy="650" r="11.700" />
        <circle cx="492" cy="546.500" r="16.700" />
        <circle cx="490.500" cy="551" r="14.200" />
        <circle cx="490.500" cy="546" r="6.500" />
        <circle cx="494" cy="551" r="11" />
        <circle cx="488" cy="554" r="7" />
        {bubbleLegend.map(([n, r]) => (
          <circle key={n} cx="346" cy={480.3 - r} r={r} />
        ))}
      </g>
      <g stroke="#333" strokeOpacity=".8" strokeWidth=".8">
        {bubbleLegend.map(([n, r, y]) => (
          <path key={n} d={`M346 ${480.3 - 2 * r}L369.500 ${y}`} />
        ))}
      </g>
      <path d="M413.700 778v20.700L401 812z" fill="#ccc" />
      <path d="M413.700 778L427 812l-13.300-13.300L401 812z" fill="none" stroke="#000" strokeWidth="1.400" />
      <g stroke="#222" fill="none">
        <path d="M335.500 845.500h141v8h-141zM349.500 845v9M363.500 845v9M392.500 845v9M420.500 845v9M448.500 845v9" />
        <path d="M336 849.500h14M364 849.500h28M421 849.500h28" />
        <path d="M335 854.500h142" stroke="#888" />
      </g>
      <Archipelago x={780} land="#ffffb2" line="#4d4d45" shaded />
      {swatches.map((c, i) => (
        <rect key={c} x="1001.500" y={455.5 + i * 18.250} width="19.500" height="11" fill={c} stroke="#555" strokeOpacity=".8" />
      ))}
      <rect x="706.500" y="296.500" width="424" height="589" fill="none" stroke="#3aa0e0" />
      <rect x="706.500" y="296.500" width="424" height="589" fill="none" stroke="#55082f" strokeDasharray="4 2" />
      {handles.map(([x, y]) => (
        <rect key={`${x}-${y}`} x={x} y={y} width="10" height="10" fill="#fff" stroke="#308cc6" />
      ))}
    </PageDrawing>
    <PageHeading $x={324} $y={332} $size={15.2} $sx={0.927} $bold>COVID-19 in the Philippines</PageHeading>
    <PageHeading $x={324} $y={350} $size={13.200} $sx={0.937}>Are we getting better?</PageHeading>
    <PageLabel $x={367.500} $y={433.500}>Active Cases</PageLabel>
    {bubbleLegend.map(([n], i) => (
      <PageLabel key={n} $x={371.500} $y={451 + i * 13.850}>{n}</PageLabel>
    ))}
    <PageLabel $x={1000.500} $y={434.500}>Confirmed Cases</PageLabel>
    {classLabels.map((t, i) => (
      <PageLabel key={t} $x={1026} $y={465.3 + i * 18.300}>{t}</PageLabel>
    ))}
    {['100', '0', '100', '200', '300'].map((t, i) => (
      <Centered key={i} $x={315.5 + i * 28.200} $y={837.800} $size={8}>{t}</Centered>
    ))}
    <PageLabel $x={468.500} $y={837.800} $size={8}>400 km</PageLabel>
  </Page>
);

/* ---------- panels ---------- */

const menus: [string, boolean][] = [
  ['Layout', true], ['Edit', true], ['View', true], ['Items', true], ['Add Item', true], ['Atlas', false], ['Settings', false],
];
const sideTools = [
  'pan', 'zoomTool', 'select', 'moveContent', 'editNodes', 'add3d', 'addMap', 'addPicture', 'addLabel', 'addLegend', 'addScale',
  'addNorth', 'addShape', 'addMarker', 'addArrow', 'addNode', 'addHtml', 'addTable', 'addFixed', 'addElevation',
];
const treeRows = [
  { name: 'Map 2', locked: false, icon: 'mapItemOn', on: true },
  { name: 'Map 1', locked: true, icon: 'mapItem' },
  { name: '<Legend>', locked: false, icon: 'legendItem' },
  { name: '<Legend>', locked: false, icon: 'legendItem' },
];
const extents = [['X min', '113.009'], ['Y min', '0.654'], ['X max', '130.524'], ['Y max', '25.003']];

const Tools = ({ names, off }: { names: string[]; off?: boolean }) => (
  <>
    {names.map((n) => (
      <ToolButton key={n} $off={off || n === 'redo'}>
        <Icon name={n} />
      </ToolButton>
    ))}
  </>
);

const ItemsDock = () => (
  <>
    <Tabs $gap={1}>
      <Tab $on $w={62}>Items</Tab>
      <Tab $w={109}>Undo History</Tab>
    </Tabs>
    <DockTitle>
      Items
      <DockButtonPair />
    </DockTitle>
    <Tree>
      <TreeBody>
        <TreeHeader>
          <HeaderCell><Icon name="eyeGray" size={16} /></HeaderCell>
          <HeaderCell><Icon name="padlock" size={16} /></HeaderCell>
          <HeaderCell $last>Item</HeaderCell>
        </TreeHeader>
        {treeRows.map((r, i) => (
          <TreeRow key={i} $on={r.on}>
            <Check><Tick /></Check>
            <Check>{r.locked && <Tick />}</Check>
            <Icon name={r.icon} size={15} />
            <span>{r.name}</span>
          </TreeRow>
        ))}
      </TreeBody>
      <ScrollTrack>
        <ScrollArrow><Arrow up /></ScrollArrow>
        <ScrollThumb $h={41} />
        <Fill $line />
        <ScrollArrow><Arrow /></ScrollArrow>
      </ScrollTrack>
    </Tree>
  </>
);

const PropertiesDock = () => (
  <>
    <Tabs>
      <Tab $w={70}>Layout</Tab>
      <Tab $on $w={123}>Item Properties</Tab>
    </Tabs>
    <DockTitle>
      Item Properties
      <DockButtonPair />
    </DockTitle>
    <ItemName>Map 2</ItemName>
    <PropTools>
      <ToolButton $w={26}><Icon name="refresh" size={15} /></ToolButton>
      <ToolSeparator $w={5} $h={12} />
      <ToolButton $w={26}><Icon name="extentIn" size={16} /></ToolButton>
      <ToolButton $w={26}><Icon name="extentOut" size={16} /></ToolButton>
      <ToolSeparator $w={5} $h={12} />
      <ToolButton $w={26}><Icon name="scaleIn" size={16} /></ToolButton>
      <ToolButton $w={26}><Icon name="scaleOut" size={16} /></ToolButton>
      <ToolSeparator $w={5} $h={12} />
      <ToolButton $w={26}><Icon name="bookmark" size={16} /></ToolButton>
      <ToolButton $w={26}><Icon name="moveContent" size={16} /></ToolButton>
      <ToolSeparator $w={5} $h={12} />
      <ToolButton $w={26}><Icon name="labels" size={15} /></ToolButton>
    </PropTools>
    <PropScroll>
      <PropBody>
        <SectionTitle>
          <Twisty><Triangle open /></Twisty>
          Main Properties
        </SectionTitle>
        <Group $h={146}>
          <Row $h={25}>
            <FieldLabel $w={89}>Scale</FieldLabel>
            <Field>11000000</Field>
            <DataDefined />
          </Row>
          <Row $h={24} $gap={8}>
            <FieldLabel $w={89}>Map rotation</FieldLabel>
            <Field $pad={4}>
              0.00 °
              <Spin><Arrow up /><Arrow /></Spin>
            </Field>
            <DataDefined />
          </Row>
          <Row $h={26} $gap={7}>
            <FieldLabel $w={89}>CRS</FieldLabel>
            <Select $w={327}>Use Project CRS<Arrow /></Select>
            <PushButton><Icon name="globe" size={16} /></PushButton>
            <DataDefined />
          </Row>
          <Row $h={16} $gap={9}>
            <CheckLabel><Check />Draw map canvas items</CheckLabel>
          </Row>
        </Group>
        <SectionTitle $gap={3}>
          <Twisty><Triangle open /></Twisty>
          Layers
        </SectionTitle>
        <Group $h={114}>
          <Row $h={25}>
            <CheckLabel><Check><Tick /></Check>Follow map theme</CheckLabel>
            <Select $w={220}>Confirmed Cases<Arrow /></Select>
            <DataDefined />
          </Row>
          <Row $h={24} $gap={7}>
            <CheckLabel><Check />Lock layers</CheckLabel>
            <PushButton><Icon name="eye" size={16} /></PushButton>
            <DataDefined />
          </Row>
          <Row $h={16} $gap={12}>
            <CheckLabel $off><Check $off />Lock styles for layers</CheckLabel>
          </Row>
        </Group>
        <SectionTitle $gap={3}>
          <Twisty><Triangle open /></Twisty>
          Extents
        </SectionTitle>
        <Group $h={149}>
          {extents.map(([label, value], i) => (
            <Row key={label} $h={25} $gap={i ? 7 : 0}>
              <FieldLabel $w={48}>{label}</FieldLabel>
              <Field>{value}</Field>
              <DataDefined />
            </Row>
          ))}
        </Group>
        <SectionTitle $gap={2} $closed>
          <Twisty $w={19}><Triangle /></Twisty>
          <CheckSlot><Check /></CheckSlot>
          Temporal Range
        </SectionTitle>
        <SectionTitle $closed $off>
          <Twisty $w={19}><Triangle off /></Twisty>
          <CheckSlot><Check $off /></CheckSlot>
          Controlled by Atlas
        </SectionTitle>
        {['Grids', 'Overviews', 'Position and Size'].map((t) => (
          <SectionTitle key={t} $closed>
            <Twisty><Triangle /></Twisty>
            {t}
          </SectionTitle>
        ))}
      </PropBody>
      <ScrollTrack>
        <ScrollArrow><Arrow up /></ScrollArrow>
        <ScrollThumb $h={459} />
        <Fill $line />
        <ScrollArrow><Arrow /></ScrollArrow>
      </ScrollTrack>
    </PropScroll>
  </>
);

export default function App() {
  return (
    <Window>
      <GlobalStyle />
      <TitleBar>
        <span />
        <WindowTitle>*Layout Basics</WindowTitle>
        <WindowButtons>
          <svg width="82" height="20" viewBox="0 0 82 20">
            <rect x="0" y="12" width="8" height="2" fill="#fff" />
            <rect x="36" y="8" width="4" height="4" fill="none" stroke="#fff" strokeWidth="2" />
            <circle cx="72" cy="10.500" r="9.500" fill="#f48b2a" />
            <path d="M69 7.500l6 6M75 7.500l-6 6" stroke="#fff" strokeWidth="2" />
          </svg>
        </WindowButtons>
      </TitleBar>
      <MenuBar>
        {menus.map(([m, key]) => (
          <span key={m}>
            {key ? <Mnemonic>{m[0]}</Mnemonic> : m[0]}
            {m.slice(1)}
          </span>
        ))}
      </MenuBar>
      <Toolbar $h={39}>
        <Grip $w={12} />
        <Tools names={['save']} />
        <ToolSeparator $w={7} />
        <Tools names={['newLayout', 'duplicate', 'manager', 'folder', 'saveAs']} />
        <ToolSeparator $w={8} />
        <Tools names={['newPage']} />
        <ToolSeparator $w={5} />
        <Tools names={['print', 'exportImage', 'exportSvg', 'exportPdf', 'undo', 'redo']} />
        <Grip $w={17} />
        <Tools names={['atlas', 'first', 'prev']} off />
        <AtlasCombo>
          1
          <ComboArrow $w={20}><Arrow color="#bbb" /></ComboArrow>
        </AtlasCombo>
        <Tools names={['next', 'last', 'print', 'exportImage']} off />
        <ToolButton $w={12}><Arrow color="#b5b5b5" /></ToolButton>
        <Tools names={['atlasSettings']} />
      </Toolbar>
      <Toolbar $h={38}>
        <Grip $w={12} />
        <Tools names={['zoomIn', 'zoomOut', 'zoomActual', 'zoomFull', 'refresh']} />
        <Grip $w={17} />
        <Tools names={['lock', 'unlock', 'group', 'ungroup', 'raise', 'align', 'distribute', 'resize']} />
      </Toolbar>
      <Main>
        <SideTools>
          <SideGrip />
          {sideTools.map((n) => (
            <SideButton key={n} $on={n === 'select'}>
              <Icon name={n} size={23} />
            </SideButton>
          ))}
        </SideTools>
        <Workspace>
          <HorizontalRuler />
          <CanvasRow>
            <VerticalRuler />
            <Canvas>
              <LayoutPage />
            </Canvas>
          </CanvasRow>
        </Workspace>
        <Splitter />
        <Docks>
          <ItemsDock />
          <HSplitter />
          <PropertiesDock />
        </Docks>
      </Main>
      <StatusBar>
        <StatusText $w={106}>x: 327.413 mm</StatusText>
        <StatusText $w={106}>y: 117.569 mm</StatusText>
        <StatusText $w={106}>page: 1</StatusText>
        <ZoomCombo>
          74.3%
          <ComboArrow $w={20}><Arrow /></ComboArrow>
        </ZoomCombo>
        <SliderTrack><SliderKnob /></SliderTrack>
      </StatusBar>
    </Window>
  );
}
